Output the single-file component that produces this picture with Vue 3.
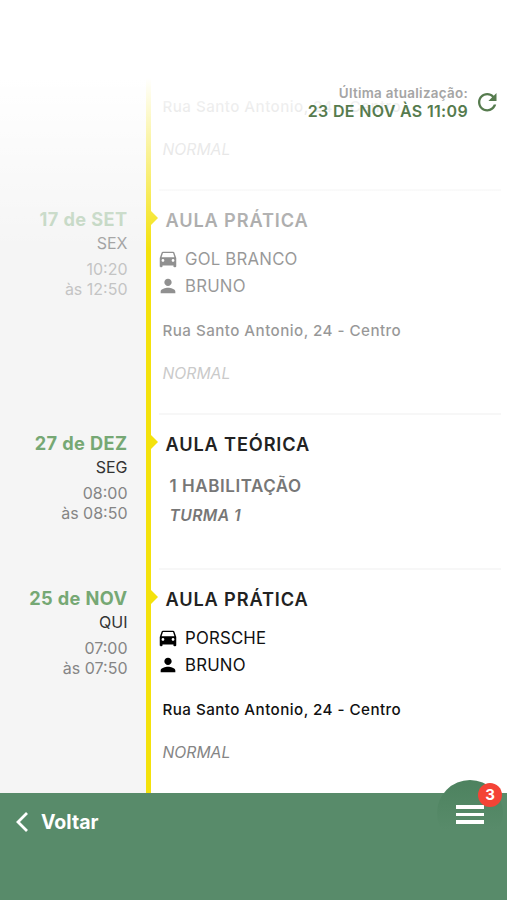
<template>
  <div class="schedule">
    <!-- lista de aulas -->
    <div class="lessonList">
      <div
        class="lessonItem"
        v-for="item in lessons"
        :key="item.id"
        :class="{ past: item.past, cut: !item.day }"
      >
        <div class="dateCol">
          <template v-if="item.day">
            <p class="day">{{ item.day }}</p>
            <p class="week">{{ item.week }}</p>
            <p class="hour">{{ item.start }}</p>
            <p class="hour">às {{ item.end }}</p>
          </template>
        </div>
        <div class="line"></div>
        <div class="infoCol" :class="{ theory: item.theory }">
          <h2 class="title" v-if="item.title">{{ item.title }}</h2>
          <template v-if="item.theory">
            <p class="subject">{{ item.subject }}</p>
            <p class="group">{{ item.group }}</p>
          </template>
          <template v-else>
            <p class="row" v-if="item.car">
              <svg class="icon" viewBox="0 0 24 24">
                <path
                  d="M18.92 5.01C18.72 4.42 18.16 4 17.5 4h-11c-.66 0-1.21.42-1.42 1.01L3 11v9c0 .55.45 1 1 1h1c.55 0 1-.45 1-1v-1h12v1c0 .55.45 1 1 1h1c.55 0 1-.45 1-1v-9l-2.08-5.99zM6.5 15c-.83 0-1.5-.67-1.5-1.5S5.67 12 6.5 12s1.5.67 1.5 1.5S7.33 15 6.5 15zm11 0c-.83 0-1.5-.67-1.5-1.5s.67-1.5 1.5-1.5 1.5.67 1.5 1.5-.67 1.5-1.5 1.5zM5 10l1.5-4.5h11L19 10H5z"
                />
              </svg>
              <span>{{ item.car }}</span>
            </p>
            <p class="row" v-if="item.teacher">
              <svg class="icon" viewBox="0 0 24 24">
                <path
                  d="M12 12c2.21 0 4-1.79 4-4s-1.79-4-4-4-4 1.79-4 4 1.79 4 4 4zm0 2c-2.67 0-8 1.34-8 4v2h16v-2c0-2.66-5.33-4-8-4z"
                />
              </svg>
              <span>{{ item.teacher }}</span>
            </p>
            <p class="address">{{ item.address }}</p>
            <p class="kind">NORMAL</p>
          </template>
        </div>
      </div>
    </div>

    <!-- degradê e última atualização -->
    <div class="fade"></div>
    <div class="update">
      <div class="updateText">
        <p class="updateLabel">Última atualização:</p>
        <p class="updateDate">23 DE NOV ÀS 11:09</p>
      </div>
      <svg class="refresh" viewBox="4 4 16 16">
        <path
          d="M17.65 6.35C16.2 4.9 14.21 4 12 4c-4.42 0-7.99 3.58-7.99 8s3.57 8 7.99 8c3.73 0 6.84-2.55 7.73-6h-2.08c-.82 2.33-3.04 4-5.65 4-3.31 0-6-2.69-6-6s2.69-6 6-6c1.66 0 3.14.69 4.22 1.78L13 11h7V4l-2.35 2.35z"
        />
      </svg>
    </div>

    <!-- rodapé -->
    <div class="footer">
      <div class="back">
        <svg class="chevron" viewBox="0 0 14 22">
          <path d="M12 2 3 11l9 9" />
        </svg>
        <span>Voltar</span>
      </div>
      <div class="menu">
        <div class="bars">
          <i></i>
          <i></i>
          <i></i>
        </div>
        <span class="badge">{{ notices }}</span>
      </div>
    </div>
  </div>
</template>

<script setup>
import { ref } from 'vue'

const notices = ref(3)

const lessons = ref([
  // só o final desta aula fica visível
  {
    id: 1,
    past: true,
    address: 'Rua Santo Antonio, 24 - Centro'
  },
  {
    id: 2,
    past: true,
    day: '17 de SET',
    week: 'SEX',
    start: '10:20',
    end: '12:50',
    title: 'AULA PRÁTICA',
    car: 'GOL BRANCO',
    teacher: 'BRUNO',
    address: 'Rua Santo Antonio, 24 - Centro'
  },
  {
    id: 3,
    theory: true,
    day: '27 de DEZ',
    week: 'SEG',
    start: '08:00',
    end: '08:50',
    title: 'AULA TEÓRICA',
    subject: '1 HABILITAÇÃO',
    group: 'TURMA 1'
  },
  {
    id: 4,
    day: '25 de NOV',
    week: 'QUI',
    start: '07:00',
    end: '07:50',
    title: 'AULA PRÁTICA',
    car: 'PORSCHE',
    teacher: 'BRUNO',
    address: 'Rua Santo Antonio, 24 - Centro'
  }
])
</script>

<style>
body {
  margin: 0;
  background: #fff;
}
</style>

<style scoped>
.schedule {
  position: relative;
  height: 900px;
  overflow: hidden;
  display: flex;
  flex-direction: column;
  font-family: Inter, 'Liberation Sans', sans-serif;
  color: #111;
}

p,
h2 {
  margin: 0;
  white-space: nowrap;
}

/* lista */
.lessonList {
  height: 793px;
  overflow: hidden;
  display: flex;
  flex-direction: column;
  justify-content: flex-end;
}

.lessonItem {
  flex: none;
  height: 224px;
  display: flex;
}

.lessonItem:has(.theory) {
  height: 155px;
}

.lessonItem.cut {
  height: 189px;
}

/* data */
.dateCol {
  box-sizing: border-box;
  width: 145.5px;
  padding: 17px 18px 0 0;
  background: #f5f5f5;
  text-align: right;
}

.day {
  font-size: 18.2px;
  font-weight: 700;
  line-height: 24px;
  letter-spacing: 0.4px;
  color: #76a874;
}

.week {
  font-size: 16px;
  line-height: 24px;
  margin-bottom: 5px;
  color: #333;
}

.hour {
  font-size: 16px;
  line-height: 19.5px;
  color: #858585;
}

/* linha do tempo */
.line {
  position: relative;
  width: 5px;
  background: #f4e20c;
}

.line::after {
  content: '';
  position: absolute;
  left: 4px;
  top: 20px;
  border: 8px solid transparent;
  border-left: 8px solid #f4e20c;
  border-right: 0;
}

.cut .line::after {
  display: none;
}

/* conteúdo */
.infoCol {
  flex: 1;
  box-sizing: border-box;
  margin: -1px 6px 0 8px;
  padding-top: 17px;
  border-top: 2px solid #f7f7f7;
}

.cut .infoCol {
  margin-top: 0;
  padding-top: 74px;
  border-top: 0;
}

.title {
  padding-left: 7px;
  margin-bottom: 13px;
  font-size: 18.2px;
  font-weight: 600;
  line-height: 24px;
  letter-spacing: 0.85px;
  color: #222;
}

.row {
  height: 27px;
  display: flex;
  align-items: center;
  gap: 8px;
  font-size: 16.8px;
  letter-spacing: 0.2px;
}

.icon {
  flex: none;
  width: 22px;
  height: 22px;
  margin: 0 -2px 0 -1.5px;
  fill: #000;
}

.address {
  margin-top: 21px;
  padding-left: 4px;
  font-size: 15.2px;
  font-weight: 500;
  line-height: 22px;
  letter-spacing: 0.44px;
}

.kind {
  margin-top: 21px;
  padding-left: 4px;
  font-size: 15.7px;
  font-style: italic;
  line-height: 22px;
  color: #858585;
}

.subject {
  margin-top: 18px;
  padding-left: 11px;
  font-size: 17px;
  font-weight: 600;
  line-height: 24px;
  letter-spacing: 0.55px;
  color: #777;
}

.group {
  margin-top: 6px;
  padding-left: 11px;
  font-size: 15.7px;
  font-weight: 600;
  font-style: italic;
  line-height: 24px;
  letter-spacing: 0.4px;
  color: #777;
}

/* aulas passadas */
.past .dateCol > p,
.past .infoCol > * {
  opacity: 0.43;
}

/* topo */
.fade {
  position: absolute;
  left: 0;
  right: 0;
  top: 0;
  height: 250px;
  background: linear-gradient(#fff 78px, rgba(255, 255, 255, 0) 250px);
}

.update {
  position: absolute;
  top: 85px;
  right: 10.5px;
  display: flex;
  align-items: center;
  gap: 10px;
  text-align: right;
}

.updateLabel {
  font-size: 13.4px;
  font-weight: 600;
  line-height: 17px;
  letter-spacing: 0.3px;
  color: #a5a5a5;
}

.updateDate {
  font-size: 16px;
  font-weight: 600;
  line-height: 18px;
  letter-spacing: 0.33px;
  color: #567b4e;
}

.refresh {
  width: 18.5px;
  height: 18.5px;
  fill: #567b4e;
}

/* rodapé */
.footer {
  height: 107px;
  display: flex;
  justify-content: space-between;
  align-items: flex-start;
  background: #588b6a;
  color: #fff;
}

.back {
  display: flex;
  align-items: center;
  gap: 12px;
  padding: 17px 0 0 15px;
  font-size: 19.5px;
  font-weight: 700;
  line-height: 24px;
}

.chevron {
  width: 14px;
  height: 22px;
  fill: none;
  stroke: #fff;
  stroke-width: 2.8;
}

.menu {
  position: relative;
  width: 66px;
  height: 66px;
  margin: -13px 4px 0 0;
  border-radius: 50%;
  background: linear-gradient(#4d825f, #588b6a 75%);
  display: flex;
  justify-content: center;
  align-items: center;
}

.bars {
  display: flex;
  flex-direction: column;
  gap: 4px;
  padding-top: 3px;
}

.bars i {
  width: 28px;
  height: 3.6px;
  background: #fff;
}

.badge {
  position: absolute;
  top: 3px;
  right: 1px;
  width: 24px;
  height: 24px;
  border-radius: 50%;
  background: #f44336;
  font-size: 15px;
  font-weight: 700;
  line-height: 24px;
  text-align: center;
}
</style>
